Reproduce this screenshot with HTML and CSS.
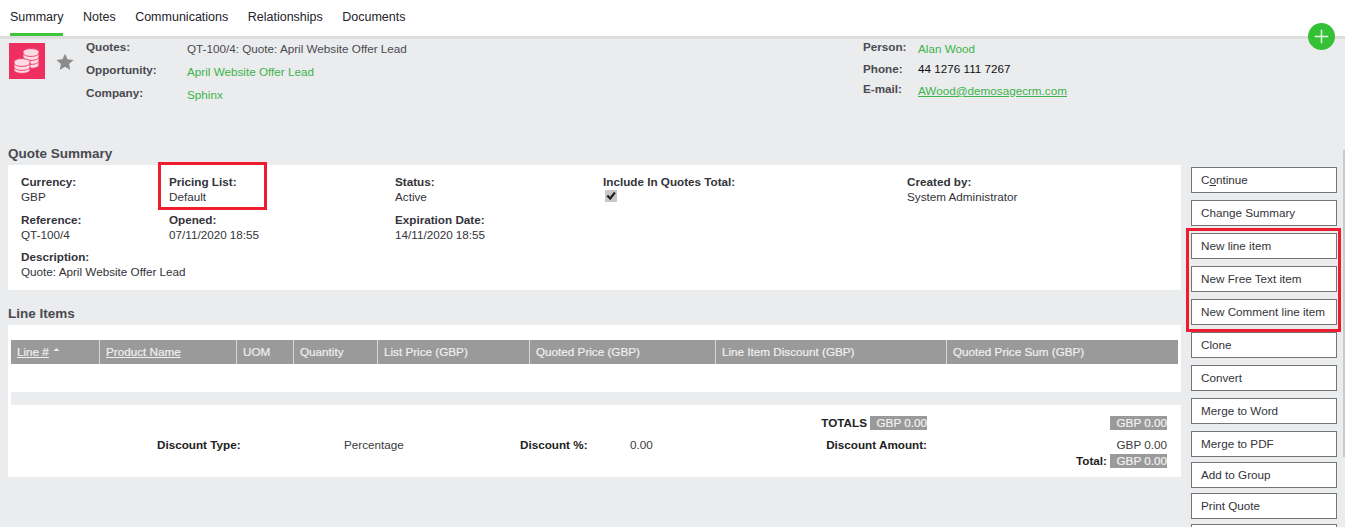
FILE: index.html
```html
<!DOCTYPE html>
<html lang="en">
<head>
<meta charset="utf-8">
<title>Quote Summary</title>
<link rel="stylesheet" href="styles.css">
</head>
<body>
<div class="page">
  <nav class="tabs">
    <a class="tab active">Summary</a>
    <a class="tab">Notes</a>
    <a class="tab">Communications</a>
    <a class="tab">Relationships</a>
    <a class="tab">Documents</a>
  </nav>
  <header class="head">
    <svg class="logo" viewBox="0 0 36 36" aria-hidden="true">
      <rect width="36" height="36" fill="#ee2f60"/>
      <g fill="#fcdbe3" stroke="#ee2f60" stroke-width=".9">
        <path d="M14 9c0-1.900 3.600-3.400 8-3.400s8 1.500 8 3.400v13c0 1.900-3.600 3.400-8 3.400s-8-1.500-8-3.400z"/>
        <path fill="none" d="M14 10c0 1.900 3.600 3.400 8 3.400s8-1.500 8-3.400M14 14c0 1.900 3.600 3.400 8 3.400s8-1.500 8-3.400M14 18c0 1.900 3.600 3.400 8 3.400s8-1.500 8-3.400"/>
        <path d="M5 19c0-1.900 3.600-3.400 8-3.400s8 1.500 8 3.400v8c0 1.900-3.600 3.400-8 3.400s-8-1.500-8-3.400z"/>
        <path fill="none" d="M5 20c0 1.900 3.600 3.400 8 3.400s8-1.500 8-3.400M5 24c0 1.900 3.600 3.400 8 3.400s8-1.500 8-3.400"/>
      </g>
    </svg>
    <svg class="star" viewBox="0 0 20 20" aria-hidden="true">
      <path fill="#8b8b8b" d="M10 .8l2.800 6.200 6.700.7-5 4.500 1.400 6.600-5.900-3.400-5.900 3.400 1.400-6.600-5-4.500 6.700-.7z"/>
    </svg>
    <dl class="meta">
      <dt>Quotes:</dt><dd>QT-100/4: Quote: April Website Offer Lead</dd>
      <dt>Opportunity:</dt><dd><a class="link">April Website Offer Lead</a></dd>
      <dt>Company:</dt><dd><a class="link">Sphinx</a></dd>
    </dl>
    <dl class="contact">
      <dt>Person:</dt><dd><a class="link">Alan Wood</a></dd>
      <dt>Phone:</dt><dd class="phone">44 1276 111 7267</dd>
      <dt>E-mail:</dt><dd><a class="link under">AWood@demosagecrm.com</a></dd>
    </dl>
  </header>
  <div class="main">
    <div class="content">
      <h2 class="title first">Quote Summary</h2>
      <section class="panel summary">
        <div class="field"><b>Currency:</b><span>GBP</span></div>
        <div class="field"><b>Pricing List:</b><span>Default</span></div>
        <div class="field"><b>Status:</b><span>Active</span></div>
        <div class="field"><b>Include In Quotes Total:</b>
          <svg class="check" viewBox="0 0 12 12" aria-hidden="true">
            <rect width="12" height="12" fill="#c8c8c8"/>
            <path d="M2.300 5.500l2.900 3 4.700-6" fill="none" stroke="#222" stroke-width="2.200"/>
          </svg>
        </div>
        <div class="field"><b>Created by:</b><span>System Administrator</span></div>
        <div class="field"><b>Reference:</b><span>QT-100/4</span></div>
        <div class="field"><b>Opened:</b><span>07/11/2020 18:55</span></div>
        <div class="field wide"><b>Expiration Date:</b><span>14/11/2020 18:55</span></div>
        <div class="field full"><b>Description:</b><span>Quote: April Website Offer Lead</span></div>
      </section>
      <h2 class="title second">Line Items</h2>
      <section class="panel items">
        <div class="thead">
          <div class="th"><u>Line #</u><svg class="sort" viewBox="0 0 8 4" aria-hidden="true"><path d="M0 4l4-4 4 4z" fill="#eee"/></svg></div>
          <div class="th"><u>Product Name</u></div>
          <div class="th">UOM</div>
          <div class="th">Quantity</div>
          <div class="th">List Price (GBP)</div>
          <div class="th">Quoted Price (GBP)</div>
          <div class="th">Line Item Discount (GBP)</div>
          <div class="th">Quoted Price Sum (GBP)</div>
        </div>
      </section>
      <div class="band"></div>
      <section class="panel totals">
        <div class="r col-amount row-a"><b class="dark">TOTALS</b><span class="chip">GBP 0.00</span></div>
        <div class="r col-sum row-a"><span class="chip">GBP 0.00</span></div>
        <b class="dark col-type row-b">Discount Type:</b>
        <span class="col-value row-b">Percentage</span>
        <b class="dark col-pct row-b">Discount %:</b>
        <span class="col-num row-b">0.00</span>
        <b class="dark r col-amount row-b">Discount Amount:</b>
        <span class="r col-sum row-b">GBP 0.00</span>
        <div class="r col-sum row-c"><b class="dark">Total:</b><span class="chip">GBP 0.00</span></div>
      </section>
    </div>
    <aside class="actions">
      <a class="btn">C<u>o</u>ntinue</a>
      <a class="btn">Change Summary</a>
      <a class="btn">New line item</a>
      <a class="btn">New Free Text item</a>
      <a class="btn">New Comment line item</a>
      <a class="btn">Clone</a>
      <a class="btn">Convert</a>
      <a class="btn">Merge to Word</a>
      <a class="btn tight">Merge to PDF</a>
      <a class="btn tight">Add to Group</a>
      <a class="btn tight">Print Quote</a>
      <a class="btn tight"></a>
    </aside>
  </div>
  <span class="mark mark-price"></span>
  <span class="mark mark-new"></span>
  <span class="scroll"></span>
  <span class="fab"><svg viewBox="0 0 28 28" aria-hidden="true"><path d="M14 7v14M7 14h14" stroke="#e4f6e4" stroke-width="1.600"/></svg></span>
</div>
</body>
</html>
```
FILE: styles.css
```css
* { box-sizing: border-box; }
html, body { margin: 0; height: 100%; }
body {
  background: #ebecee;
  color: #3a3a3c;
  font: 11.7px/15px "Liberation Sans", Arial, sans-serif;
  overflow: hidden;
}
.page { position: relative; width: 1345px; height: 527px; overflow: hidden; }

.tabs {
  display: flex;
  gap: 19.500px;
  height: 39px;
  padding-left: 10px;
  background: #fff;
  border-bottom: 3px solid #dcdddc;
}
.tab { height: 36px; padding-top: 10px; color: #23232b; font-size: 12.500px; line-height: 15px; }
.tab.active { border-bottom: 3px solid #3ec53a; }

.head { display: flex; height: 111px; background: #ebecee; }
.logo { width: 36px; height: 36px; margin: 4px 0 0 9px; flex: none; }
.star { width: 18px; height: 18px; margin: 14px 0 0 11px; flex: none; }
.meta, .contact { display: grid; margin: 0; align-content: start; }
.meta { grid-template-columns: 101px 520px; grid-auto-rows: 23px; margin: 0 0 0 12px; }
.contact { grid-template-columns: 55px 300px; grid-template-rows: 22px 20px 20px; margin: 0 0 0 156px; }
dt { font-weight: 700; color: #4a4a50; }
dd { margin: 2px 0 0; color: #4a4a50; }
.contact .phone { margin-top: 0; color: #111; }
.link { color: #3cb44b; }
.under { text-decoration: underline; }

.main { display: flex; }
.content { width: 1191px; padding-left: 8px; }
.title { margin: 0; color: #4a4a50; font-size: 13.500px; line-height: 15px; font-weight: 700; }
.first { height: 15px; margin-top: -4px; margin-bottom: 4px; }
.second { height: 15px; margin-top: 16px; margin-bottom: 4px; }
.panel { width: 1173px; background: #fff; }
.summary {
  display: grid;
  grid-template-columns: 148px 226px 208px 304px 1fr;
  grid-template-rows: 38px 37px 30px;
  height: 125px;
  padding: 9px 0 0 13px;
}
.field b, .field span { display: block; color: #33333a; }
.field b { font-weight: 700; }
.field.wide { grid-column: span 3; }
.field.full { grid-column: 1 / -1; }
.check { display: block; width: 12px; height: 12px; margin: 1px 0 0 2px; }

.items { height: 67px; padding: 15px 3px 0; }
.thead {
  display: grid;
  grid-template-columns: 88px 137px 57px 84px 152px 186px 231px 1fr;
  height: 24px;
  background: #9a9a9b;
}
.th {
  display: flex;
  align-items: center;
  gap: 4px;
  padding: 0 0 2px 6px;
  border-left: 1px solid #d8d8d8;
  color: #f0f0f0;
  -webkit-text-stroke: 0.2px #f0f0f0;
}
.th:first-child { border-left: 0; padding-left: 6px; }
.sort { width: 7px; height: 3px; margin-bottom: 3px; }
.band { height: 13px; width: 1173px; border-left: 3px solid #fff; background: #ebecee; }

.totals {
  display: grid;
  grid-template-columns: 149px 187px 176px 110px 60px 237px 240px;
  grid-template-rows: 22px 16px 14px;
  height: 72px;
  padding-top: 11px;
  color: #3a3a3c;
}
.dark { color: #222; font-weight: 700; }
.col-type { grid-column: 2; }
.col-value { grid-column: 3; }
.col-pct { grid-column: 4; }
.col-num { grid-column: 5; }
.col-amount { grid-column: 5 / 7; }
.col-sum { grid-column: 7; }
.row-a { grid-row: 1; }
.row-b { grid-row: 2; margin-top: -1px; }
.row-c { grid-row: 3; }
.r { display: flex; justify-content: flex-end; gap: 3px; }
.chip {
  display: block;
  width: 57px;
  height: 14px;
  background: #9a9a9b;
  color: #f2f2f2;
  text-align: right;
  line-height: 14px;
  -webkit-text-stroke: 0.2px #f2f2f2;
}
.row-a .dark, .row-c .dark { line-height: 14px; }

.actions { display: flex; flex-direction: column; margin-top: 17px; }
.btn {
  display: block;
  flex: none;
  width: 146px;
  height: 26px;
  margin-bottom: 7px;
  padding: 4px 0 0 9px;
  background: #fff;
  border: 1px solid #757575;
  color: #33333a;
}
.btn.tight { margin-bottom: 5px; }

.mark { position: absolute; border: 3px solid #ed1c2e; pointer-events: none; }
.mark-price { left: 158px; top: 162px; width: 109px; height: 48px; }
.mark-new { left: 1186px; top: 228px; width: 155px; height: 104px; }
.scroll { position: absolute; left: 1343px; top: 150px; width: 2px; height: 307px; background: #c9cacb; }
.fab {
  position: absolute;
  left: 1308px;
  top: 23px;
  width: 27px;
  height: 27px;
  border-radius: 50%;
  background: #34c135;
}
.fab svg { display: block; width: 27px; height: 27px; }
```
